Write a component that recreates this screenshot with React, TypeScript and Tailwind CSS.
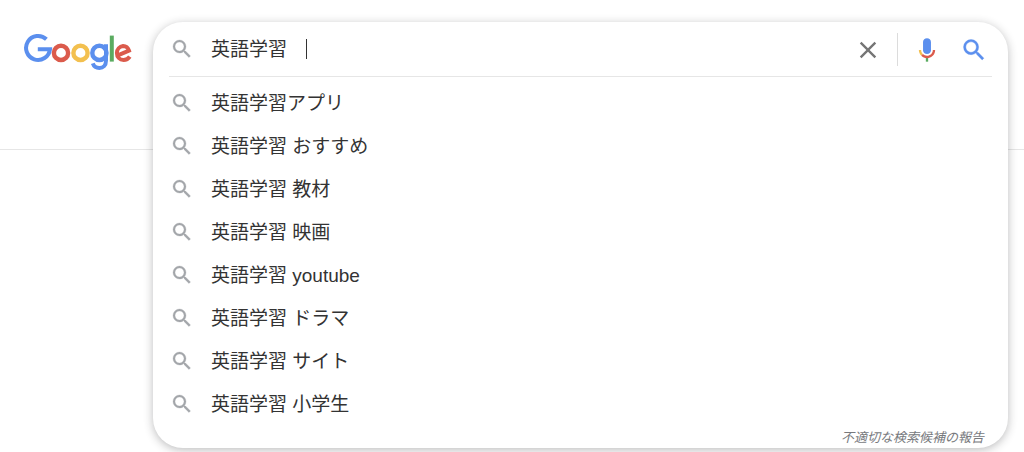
const suggestions = [
    '英語学習アプリ',
    '英語学習 おすすめ',
    '英語学習 教材',
    '英語学習 映画',
    '英語学習 youtube',
    '英語学習 ドラマ',
    '英語学習 サイト',
    '英語学習 小学生',
]

function Logo() {
    return (
        <svg
            viewBox="0 0 110 38"
            className="w-[110px] h-[38px]"
            fill="none"
            strokeWidth="4.4"
            role="img"
            aria-label="Google"
        >
            <path
                d="M23.4 7.3A12 12 0 1 0 27 17.2H14.8"
                stroke="#5b8fee"
                strokeWidth="4"
            />
            <circle cx="38" cy="20.9" r="7.1" stroke="#db5b4c" />
            <circle cx="57.5" cy="20.9" r="7.1" stroke="#f3c04f" />
            <circle cx="76.4" cy="20.9" r="7.1" stroke="#5b8fee" />
            <path
                d="M83 12.2V28.4C83 33.8 80 36 76.4 36C73.2 36 70.8 34.2 69.8 31.4"
                stroke="#5b8fee"
                strokeWidth="4"
            />
            <path d="M88.8 3.6V29.6" stroke="#5aab60" strokeWidth="4" />
            <path
                d="M94.2 23.6L106 18.6C105 15.6 102.7 13.9 100.1 13.9A7 7 0 0 0 93.9 20.9C93.9 25 96.6 28 100.6 28C103.3 28 105.3 26.9 106.8 24.7"
                stroke="#db5b4c"
                strokeWidth="4"
            />
        </svg>
    )
}

function SearchIcon({ className }: { className: string }) {
    return (
        <svg
            viewBox="0 0 24 24"
            fill="currentColor"
            stroke="currentColor"
            strokeWidth="0.3"
            className={className}
        >
            <path d="M15.5 14h-.79l-.28-.27A6.471 6.471 0 0 0 16 9.5 6.5 6.5 0 1 0 9.5 16c1.61 0 3.09-.59 4.23-1.57l.27.28v.79l5 4.99L20.49 19l-4.99-5zm-6 0C7.01 14 5 11.99 5 9.5S7.01 5 9.5 5 14 7.01 14 9.5 11.99 14 9.5 14z" />
        </svg>
    )
}

function CloseIcon() {
    return (
        <svg viewBox="0 0 24 24" fill="currentColor" className="size-7">
            <path d="M19 6.41L17.59 5 12 10.59 6.41 5 5 6.41 10.59 12 5 17.59 6.41 19 12 13.41 17.59 19 19 17.59 13.41 12z" />
        </svg>
    )
}

function MicIcon() {
    return (
        <svg viewBox="0 0 24 24" className="size-7">
            <path
                fill="#5b8fee"
                d="M12 15.4c1.9 0 3.4-1.4 3.4-3.2V5.2C15.4 3.4 13.9 2 12 2S8.6 3.4 8.6 5.2v7c0 1.8 1.5 3.2 3.4 3.2z"
            />
            <path fill="#5aab60" d="M11 18.08h2V22h-2z" />
            <path
                fill="#f3c04f"
                d="M7.05 16.87C5.78 15.59 5 13.91 5 12h2c0 1.38.56 2.63 1.46 3.53l-1.41 1.34z"
            />
            <path
                fill="#db5b4c"
                d="M12 16.93a4.97 5.25 0 0 1-3.54-1.55l-1.41 1.49c1.26 1.34 3.02 2.13 4.95 2.13 3.87 0 6.99-2.92 6.99-7h-1.99c0 2.92-2.24 4.93-5 4.93z"
            />
        </svg>
    )
}

export default function App() {
    return (
        <div className="min-h-screen bg-white font-['Liberation_Sans','Noto_Sans_CJK_JP',sans-serif] text-[#333]">
            <header className="flex items-start h-[150px] pt-[22px] pr-4 pl-[23px] border-b border-[#e6e6e6]">
                <a href="#" className="shrink-0 mt-[10px] mr-5">
                    <Logo />
                </a>
                <form
                    className="flex-1 min-w-0 rounded-[30px] bg-white shadow-[0_2px_10px_rgba(32,33,36,0.3)]"
                    onSubmit={(e) => e.preventDefault()}
                >
                    <div className="flex items-center mx-4 h-[55px] border-b border-[#e6e6e6]">
                        <SearchIcon className="ml-px size-6 shrink-0 text-[#a3a6aa]" />
                        <div className="relative flex-1 ml-[17px]">
                            <input
                                type="text"
                                aria-label="検索"
                                defaultValue="英語学習"
                                className="block pb-1 w-full h-8 text-[19px] outline-none"
                            />
                            <span className="absolute top-[6px] left-[95px] w-px h-5 bg-[#333]" />
                        </div>
                        <div className="flex items-center pt-px">
                            <button
                                type="button"
                                aria-label="クリア"
                                className="mr-[15px] text-[#757575]"
                            >
                                <CloseIcon />
                            </button>
                            <div className="w-px h-[33px] bg-[#dcdcdc]" />
                            <button
                                type="button"
                                aria-label="音声で検索"
                                className="ml-[15px]"
                            >
                                <MicIcon />
                            </button>
                            <button
                                type="submit"
                                aria-label="Google 検索"
                                className="mr-1 ml-[19px]"
                            >
                                <SearchIcon className="size-7 text-[#5b8fee]" />
                            </button>
                        </div>
                    </div>
                    <ul className="pt-1">
                        {suggestions.map((text) => (
                            <li key={text}>
                                <a
                                    href="#"
                                    className="flex items-center gap-[17px] pr-4 pl-[17px] h-[43px] text-[19px]"
                                >
                                    <SearchIcon className="size-6 text-[#a3a6aa]" />
                                    <span className="pt-1">{text}</span>
                                </a>
                            </li>
                        ))}
                    </ul>
                    <div className="flex justify-end pt-[5px] pr-6 pb-[2px]">
                        <a
                            href="#"
                            className="text-[13px] leading-4 italic text-[#77797d]"
                        >
                            不適切な検索候補の報告
                        </a>
                    </div>
                </form>
            </header>
        </div>
    )
}
